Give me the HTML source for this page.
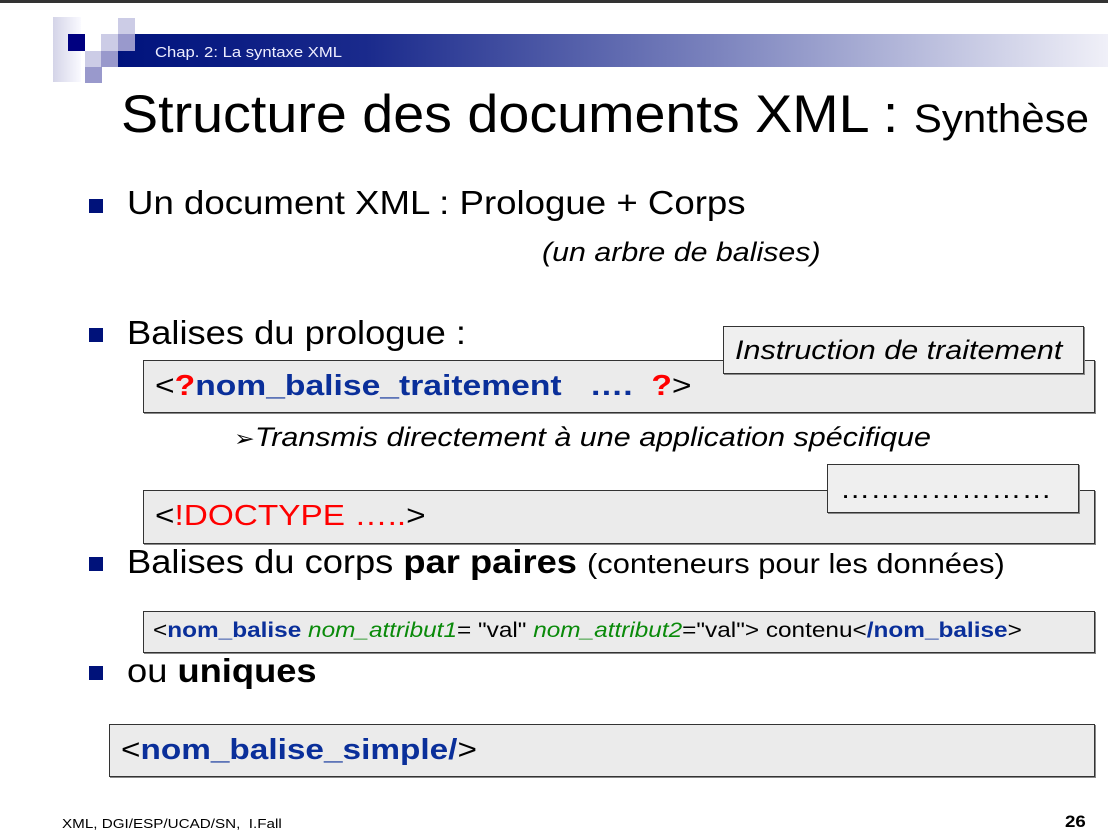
<!DOCTYPE html>
<html><head><meta charset="utf-8"><style>
body{margin:0;width:1108px;height:832px;background:#fff;position:relative;overflow:hidden;font-family:"Liberation Sans",Arial,sans-serif;}
.a{position:absolute;white-space:nowrap;transform-origin:0 0;}
.sq{position:absolute;}
.box{position:absolute;background:#ebebeb;border:1px solid #333;box-shadow:1px 1px 0 #888;}
.b{color:#0a2f9a;font-weight:bold}
.r{color:#f00}
.g{color:#0a8a0a;font-style:italic}
.bul{position:absolute;width:14px;height:14px;background:#00127a;}
</style></head><body>
<div class="a" style="left:0;top:0;width:1108px;height:3px;background:#333"></div>
<div class="sq" style="left:53px;top:17px;width:28px;height:65px;background:linear-gradient(90deg,#d4d4e8,#fafaff)"></div>
<div class="sq" style="left:118px;top:34px;width:990px;height:33px;background:linear-gradient(90deg,#00137d 0%,#1a2a8c 25%,#7a82bd 60%,#f0f0f8 100%)"></div>
<div class="sq" style="left:68px;top:34px;width:17px;height:17px;background:#000080"></div>
<div class="sq" style="left:85px;top:51px;width:17px;height:16px;background:#ccccE6"></div>
<div class="sq" style="left:85px;top:67px;width:17px;height:16px;background:#9999cc"></div>
<div class="sq" style="left:101px;top:34px;width:17px;height:17px;background:#ccccE6"></div>
<div class="sq" style="left:101px;top:51px;width:17px;height:16px;background:#9999cc"></div>
<div class="sq" style="left:118px;top:18px;width:17px;height:16px;background:#ccccE6"></div>
<div class="sq" style="left:118px;top:34px;width:17px;height:17px;background:#9999cc"></div>
<div class="a" style="left:155px;top:44px;font-size:15px;color:#eef;transform:scaleX(1.11)">Chap. 2: La syntaxe XML</div>
<div class="a" style="left:121px;top:84px;font-size:53px;color:#000;transform:scaleX(1.05)">Structure des documents XML : <span style="font-size:40px">Synthèse</span></div>

<div class="bul" style="left:89px;top:199px"></div>
<div class="a" style="left:127px;top:184px;font-size:33px;transform:scaleX(1.11)">Un document XML : Prologue + Corps</div>
<div class="a" style="left:542px;top:237px;font-size:27px;font-style:italic;transform:scaleX(1.125)">(un arbre de balises)</div>

<div class="bul" style="left:89px;top:328px"></div>
<div class="a" style="left:127px;top:314px;font-size:33px;transform:scaleX(1.1)">Balises du prologue :</div>
<div class="box" style="left:143px;top:360px;width:950px;height:51px"></div>
<div class="a" style="left:155px;top:370px;font-size:29px;transform:scaleX(1.16)">&lt;<span class="r" style="font-weight:bold">?</span><span class="b">nom_balise_traitement &nbsp; …. &nbsp;</span><span class="r" style="font-weight:bold">?</span>&gt;</div>
<div class="box" style="left:723px;top:326px;width:359px;height:46px;background:#efefef"></div>
<div class="a" style="left:735px;top:335px;font-size:27px;font-style:italic;transform:scaleX(1.13)">Instruction de traitement</div>
<div class="a" style="left:234px;top:422px;font-size:27px;font-style:italic;transform:scaleX(1.13)"><span style="font-style:normal;font-size:22px">➢</span>Transmis directement à une application spécifique</div>

<div class="box" style="left:143px;top:490px;width:950px;height:52px"></div>
<div class="a" style="left:155px;top:500px;font-size:29px;transform:scaleX(1.15)">&lt;<span class="r">!DOCTYPE …..</span>&gt;</div>
<div class="box" style="left:827px;top:464px;width:250px;height:47px;background:#efefef"></div>
<div class="a" style="left:840px;top:474px;font-size:27px;transform:scaleX(1.12)">…………………</div>

<div class="bul" style="left:89px;top:557px"></div>
<div class="a" style="left:127px;top:543px;font-size:33px;transform:scaleX(1.1)">Balises du corps <b>par paires</b> <span style="font-size:28px">(conteneurs pour les données)</span></div>
<div class="box" style="left:143px;top:611px;width:950px;height:40px"></div>
<div class="a" style="left:153px;top:619px;font-size:21px;transform:scaleX(1.16)">&lt;<span class="b">nom_balise</span> <span class="g">nom_attribut1</span>= "val" <span class="g">nom_attribut2</span>="val"&gt; contenu&lt;<span class="b">/nom_balise</span>&gt;</div>

<div class="bul" style="left:89px;top:666px"></div>
<div class="a" style="left:127px;top:652px;font-size:33px;transform:scaleX(1.1)">ou <b>uniques</b></div>
<div class="box" style="left:109px;top:724px;width:984px;height:51px"></div>
<div class="a" style="left:121px;top:734px;font-size:29px;transform:scaleX(1.15)">&lt;<span class="b">nom_balise_simple/</span>&gt;</div>

<div class="a" style="left:62px;top:816px;font-size:13px;transform:scaleX(1.17)">XML, DGI/ESP/UCAD/SN, &nbsp;I.Fall</div>
<div class="a" style="left:1065px;top:812px;font-size:17px;font-weight:bold;transform:scaleX(1.1)">26</div>
</body></html>
